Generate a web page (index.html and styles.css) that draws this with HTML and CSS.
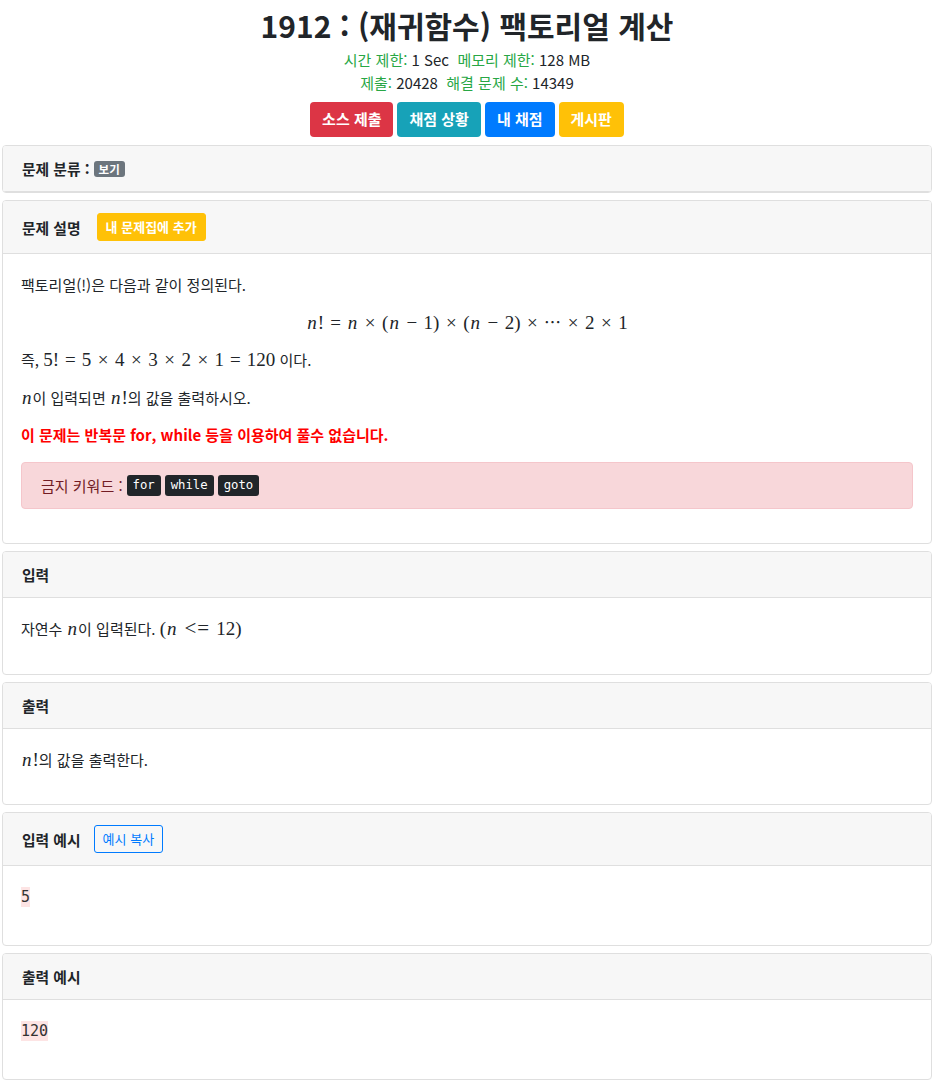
FILE: index.html
```html
<!DOCTYPE html>
<html lang="ko">
<head>
<meta charset="utf-8">
<title>1912 : (재귀함수) 팩토리얼 계산</title>
<link rel="stylesheet" href="styles.css">
</head>
<body>
<div class="wrap">
  <h1 class="title">1912 : (재귀함수) 팩토리얼 계산</h1>
  <div class="meta"><span class="lbl">시간 제한:</span> 1 Sec&nbsp;&nbsp;<span class="lbl">메모리 제한:</span> 128 MB</div>
  <div class="meta"><span class="lbl">제출:</span> 20428&nbsp;&nbsp;<span class="lbl">해결 문제 수:</span> 14349</div>
  <div class="btns">
    <a class="btn red">소스 제출</a>
    <a class="btn teal">채점 상황</a>
    <a class="btn blue">내 채점</a>
    <a class="btn yellow">게시판</a>
  </div>

  <div class="card">
    <div class="card-head">문제 분류 :<span class="badge">보기</span></div>
  </div>

  <div class="card">
    <div class="card-head">문제 설명<a class="btn-sm yellow-sm">내 문제집에 추가</a></div>
    <div class="card-body">
      <p>팩토리얼(!)은 다음과 같이 정의된다.</p>
      <p class="display"><span class="math"><span class="mi">n</span><span class="mo">!</span><span class="rel">=</span><span class="mi">n</span><span class="bin">×</span><span class="mo">(</span><span class="mi">n</span><span class="bin">−</span><span class="mn">1</span><span class="mo">)</span><span class="bin">×</span><span class="mo">(</span><span class="mi">n</span><span class="bin">−</span><span class="mn">2</span><span class="mo">)</span><span class="bin">×</span><span class="cdots">⋯</span><span class="bin">×</span><span class="mn">2</span><span class="bin">×</span><span class="mn">1</span></span></p>
      <p>즉, <span class="math"><span class="mn">5</span><span class="mo">!</span><span class="rel">=</span><span class="mn">5</span><span class="bin">×</span><span class="mn">4</span><span class="bin">×</span><span class="mn">3</span><span class="bin">×</span><span class="mn">2</span><span class="bin">×</span><span class="mn">1</span><span class="rel">=</span><span class="mn">120</span></span> 이다.</p>
      <p><span class="math"><span class="mi">n</span></span>이 입력되면 <span class="math"><span class="mi">n</span><span class="mo">!</span></span>의 값을 출력하시오.</p>
      <p class="warn">이 문제는 반복문 for, while 등을 이용하여 풀수 없습니다.</p>
      <div class="alert">금지 키워드 :<kbd>for</kbd><kbd>while</kbd><kbd>goto</kbd></div>
    </div>
  </div>

  <div class="card">
    <div class="card-head">입력</div>
    <div class="card-body">
      <p>자연수 <span class="math"><span class="mi">n</span></span>이 입력된다. <span class="math"><span class="mo">(</span><span class="mi">n</span><span class="rel wide">&lt;=</span><span class="mn">12</span><span class="mo">)</span></span></p>
    </div>
  </div>

  <div class="card">
    <div class="card-head">출력</div>
    <div class="card-body">
      <p><span class="math"><span class="mi">n</span><span class="mo">!</span></span>의 값을 출력한다.</p>
    </div>
  </div>

  <div class="card">
    <div class="card-head">입력 예시<a class="btn-sm outline">예시 복사</a></div>
    <div class="card-body">
      <pre class="sample"><code>5</code></pre>
    </div>
  </div>

  <div class="card">
    <div class="card-head">출력 예시</div>
    <div class="card-body">
      <pre class="sample"><code>120</code></pre>
    </div>
  </div>
</div>
</body>
</html>
```
FILE: styles.css
```css
html, body {
  margin: 0;
  padding: 0;
  background: #fff;
}
body {
  font-family: "Noto Sans CJK KR", "Noto Sans", sans-serif;
  font-size: 15px;
  line-height: 1.5;
  color: #212529;
}
.wrap {
  margin: 0 6px 0 2px;
  padding-bottom: 6px;
}
.title {
  margin: 8px 0 6px;
  font-size: 30px;
  line-height: 34px;
  font-weight: 700;
  text-align: center;
  color: #212529;
}
.meta {
  text-align: center;
  font-size: 15px;
  line-height: 23px;
}
.lbl {
  color: #28a745;
}
.btns {
  display: flex;
  justify-content: center;
  gap: 4px;
  margin: 8px 0 8px;
}
.btn {
  display: inline-flex;
  align-items: center;
  height: 35px;
  padding: 0 12px;
  border-radius: 4px;
  color: #fff;
  font-size: 15px;
  font-weight: 700;
  box-sizing: border-box;
}
.red { background: #dc3545; }
.teal { background: #17a2b8; }
.blue { background: #007bff; }
.yellow { background: #ffc107; }

.card {
  border: 1px solid #dfdfdf;
  border-radius: 4px;
  margin-bottom: 7px;
  background: #fff;
  overflow: hidden;
}
.card-head {
  display: flex;
  align-items: center;
  padding: 12px 19px;
  background: #f7f7f7;
  border-bottom: 1px solid #dfdfdf;
  font-weight: 700;
  font-size: 14.8px;
  line-height: 21px;
}
.badge {
  display: inline-block;
  margin-left: 4px;
  padding: 0 5px;
  height: 16px;
  line-height: 16px;
  font-size: 11.5px;
  font-weight: 700;
  color: #fff;
  background: #6c757d;
  border-radius: 3px;
}
.btn-sm {
  display: inline-block;
  padding: 4px 8px;
  font-size: 13px;
  line-height: 18px;
  border-radius: 3px;
  box-sizing: border-box;
}
.yellow-sm {
  margin-left: 16px;
  background: #ffc107;
  color: #fff;
  font-weight: 700;
  border: 1px solid #ffc107;
}
.outline {
  margin-left: 13px;
  border: 1px solid #007bff;
  color: #007bff;
  font-weight: 400;
}
.card-body {
  padding: 20px 18px 18px;
}
.card-body p {
  margin: 0 0 16.5px;
  line-height: 21px;
}
.display {
  text-align: center;
}
.warn {
  color: #ff0000;
  font-weight: 700;
}
.math {
  font-family: "Liberation Serif", "DejaVu Serif", serif;
  font-size: 19px;
  line-height: 1;
  white-space: nowrap;
}
.mi {
  font-style: italic;
  padding: 0 1px;
}
.rel {
  margin: 0 6px;
}
.rel.wide {
  margin: 0 6px 0 7px;
  letter-spacing: 1px;
  font-size: 21px;
}
.bin {
  margin: 0 6.5px;
}
.cdots {
  font-family: "DejaVu Serif", serif;
  font-size: 17px;
}
.alert {
  display: flex;
  align-items: center;
  gap: 4px;
  margin-bottom: 16.5px;
  padding: 12px 19px;
  background: #f8d7da;
  border: 1px solid #f5c6cb;
  border-radius: 4px;
  color: #721c24;
  line-height: 21px;
}
kbd {
  font-family: "DejaVu Sans Mono", monospace;
  font-size: 12.25px;
  line-height: 15px;
  padding: 3px 6px;
  background: #212529;
  color: #fff;
  border-radius: 3px;
}
.sample {
  margin: 0 0 19px;
  font-family: "DejaVu Sans Mono", monospace;
  font-size: 15px;
  line-height: 22px;
  color: #333;
}
.sample code {
  background: #fde4e4;
  font-family: inherit;
  padding: 1px 0;
}
```
